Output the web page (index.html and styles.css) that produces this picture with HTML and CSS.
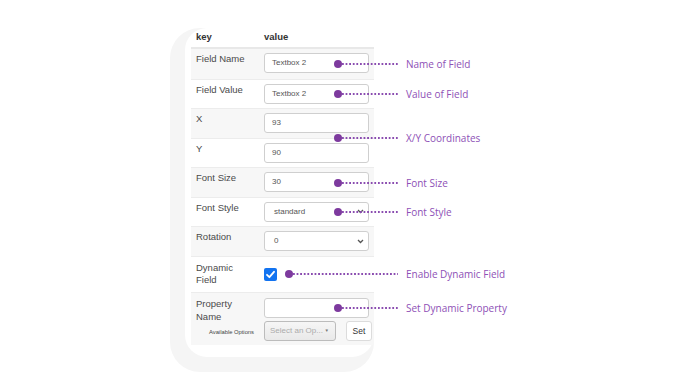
FILE: index.html
```html
<!DOCTYPE html>
<html lang="en">
<head>
<meta charset="utf-8">
<title>Field properties</title>
<link rel="stylesheet" href="styles.css">
</head>
<body>
<div class="stage">
  <div class="frame">
    <div class="screen">
      <div class="props">
        <div class="row head">
          <div class="key">key</div>
          <div class="val">value</div>
        </div>
        <div class="row alt">
          <div class="key">Field Name</div>
          <div class="val"><div class="input">Textbox 2</div></div>
        </div>
        <div class="row">
          <div class="key">Field Value</div>
          <div class="val"><div class="input">Textbox 2</div></div>
        </div>
        <div class="row alt">
          <div class="key">X</div>
          <div class="val"><div class="input">93</div></div>
        </div>
        <div class="row">
          <div class="key">Y</div>
          <div class="val"><div class="input">90</div></div>
        </div>
        <div class="row alt">
          <div class="key">Font Size</div>
          <div class="val"><div class="input">30</div></div>
        </div>
        <div class="row">
          <div class="key">Font Style</div>
          <div class="val"><div class="input select"><span>standard</span><svg class="chev" width="7" height="5" viewBox="0 0 7 5"><path d="M1 1 L3.5 3.5 L6 1" fill="none" stroke="#555" stroke-width="1.3"/></svg></div></div>
        </div>
        <div class="row alt">
          <div class="key">Rotation</div>
          <div class="val"><div class="input select"><span>0</span><svg class="chev" width="7" height="5" viewBox="0 0 7 5"><path d="M1 1 L3.5 3.5 L6 1" fill="none" stroke="#555" stroke-width="1.3"/></svg></div></div>
        </div>
        <div class="row dyn">
          <div class="key">Dynamic<br>Field</div>
          <div class="val"><span class="check"><svg width="13" height="13" viewBox="0 0 13 13"><path d="M3 6.8 L5.4 9.2 L10 3.8" fill="none" stroke="#fff" stroke-width="1.8" stroke-linecap="round" stroke-linejoin="round"/></svg></span></div>
        </div>
        <div class="row alt prop">
          <div class="key">
            <div class="plabel">Property<br>Name</div>
            <div class="avail">Available Options</div>
          </div>
          <div class="val">
            <div class="input"></div>
            <div class="controls">
              <div class="opt"><span>Select an Op...</span><span class="caret">&#9660;</span></div>
              <div class="btn">Set</div>
            </div>
          </div>
        </div>
      </div>
    </div>
  </div>

  <div class="notes">
    <div class="note n1"><span class="dot"></span><span class="line"></span><span class="txt">Name of Field</span></div>
    <div class="note n2"><span class="dot"></span><span class="line"></span><span class="txt">Value of Field</span></div>
    <div class="note n3"><span class="dot"></span><span class="line"></span><span class="txt">X/Y Coordinates</span></div>
    <div class="note n4"><span class="dot"></span><span class="line"></span><span class="txt">Font Size</span></div>
    <div class="note n5"><span class="dot"></span><span class="line"></span><span class="txt">Font Style</span></div>
    <div class="note n6"><span class="dot"></span><span class="line long"></span><span class="txt">Enable Dynamic Field</span></div>
    <div class="note n7"><span class="dot"></span><span class="line"></span><span class="txt">Set Dynamic Property</span></div>
  </div>
</div>
</body>
</html>
```

FILE: styles.css
```css
html, body {
  margin: 0;
  padding: 0;
  background: #ffffff;
}

.stage {
  position: relative;
  width: 688px;
  height: 377px;
  overflow: hidden;
  font-family: "Liberation Sans", Arial, sans-serif;
}

.frame {
  box-sizing: border-box;
  margin: 28px 0 0 170px;
  width: 204px;
  height: 344px;
  padding: 0 0 15px 15px;
  background: #f5f5f5;
  border-radius: 30px;
}

.screen {
  box-sizing: border-box;
  height: 100%;
  padding-left: 6px;
  background: #ffffff;
  border-radius: 22px 0 22px 22px;
}

.props {
  width: 183px;
}

.row {
  box-sizing: border-box;
  display: grid;
  grid-template-columns: 68px 115px;
  height: 29.5px;
  border-top: 1px solid #ececec;
  color: #4a4a4a;
  font-size: 9.5px;
  line-height: 12.5px;
}

.row.alt {
  background: #f7f7f7;
}

.row.head {
  height: 21px;
  border-top: 0;
  border-bottom: 2px solid #e8e8e8;
  font-weight: bold;
  color: #333333;
}

.row.head + .row {
  border-top: 0;
}

.key {
  padding: 4px 0 0 5px;
}

.val {
  padding: 4px 0 0 5px;
}

.row.head .key,
.row.head .val {
  padding-top: 3px;
}

.input {
  box-sizing: border-box;
  width: 105px;
  height: 20px;
  border: 1px solid #cfcfcf;
  border-radius: 3px;
  background: #ffffff;
  padding-left: 7px;
  font-size: 8px;
  line-height: 18px;
  color: #555555;
}

.input.select {
  display: flex;
  align-items: center;
  justify-content: space-between;
  padding: 0 4px 0 9px;
}

.chev {
  display: block;
}

.row.dyn {
  height: 36.5px;
  align-items: center;
}

.row.dyn .key,
.row.dyn .val {
  padding-top: 0;
}

.check {
  display: block;
  width: 13px;
  height: 13px;
  border-radius: 2px;
  background: #1273f0;
}

.check svg {
  display: block;
}

.row.prop {
  height: 53px;
}

.row.prop .key,
.row.prop .val {
  padding-top: 5px;
}

.plabel {
  line-height: 12.5px;
}

.avail {
  margin-top: 4px;
  padding-right: 5px;
  text-align: right;
  font-size: 5.8px;
  line-height: 10px;
  color: #444444;
}

.controls {
  display: flex;
  gap: 10px;
  margin-top: 3px;
}

.opt {
  box-sizing: border-box;
  display: flex;
  align-items: center;
  justify-content: space-between;
  width: 72px;
  height: 20px;
  padding: 0 6px 0 5px;
  border: 1px solid #bcbcbc;
  border-radius: 3px;
  background: linear-gradient(#f6f6f6, #e9e9e9);
  color: #ababab;
  font-size: 8px;
}

.caret {
  font-size: 4.5px;
  color: #777777;
}

.btn {
  box-sizing: border-box;
  width: 26px;
  height: 20px;
  border: 1px solid #dcdcdc;
  border-radius: 3px;
  background: #ffffff;
  color: #333333;
  font-size: 8.5px;
  line-height: 18px;
  text-align: center;
}

/* annotation overlay */
.notes {
  position: absolute;
  left: 0;
  top: 0;
}

.note {
  position: absolute;
  display: flex;
  align-items: center;
  height: 8px;
}

.dot {
  flex: none;
  width: 8px;
  height: 8px;
  border-radius: 50%;
  background: #7d3a9e;
}

.line {
  flex: none;
  width: 56px;
  height: 2px;
  margin-right: 8px;
  background-image: radial-gradient(circle at 1px 1px, #8a4cb0 0.9px, transparent 1.2px);
  background-size: 3.6px 2px;
  background-repeat: repeat-x;
}

.line.long {
  width: 105px;
}

.txt {
  font-family: "Open Sans", "Noto Sans", sans-serif;
  font-size: 10px;
  line-height: 12px;
  color: #8e50b6;
  white-space: nowrap;
}

.n1 { left: 334px; top: 60px; }
.n2 { left: 334px; top: 90px; }
.n3 { left: 334px; top: 134px; }
.n4 { left: 334px; top: 179px; }
.n5 { left: 334px; top: 208px; }
.n6 { left: 285px; top: 270px; }
.n7 { left: 334px; top: 304px; }
```
